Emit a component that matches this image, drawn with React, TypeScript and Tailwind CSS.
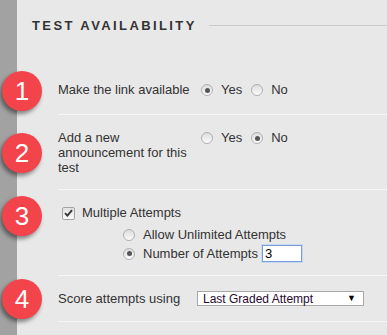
import React from "react"

const Badge = ({ n }: { n: number }) => (
    <div className="w-[40px] h-[40px] rounded-full bg-[#f3444b] text-white text-[26px] leading-none flex items-center justify-center shadow-[-2px_3px_4px_rgba(0,0,0,0.45)]">
        {n}
    </div>
)

const Radio = ({ checked }: { checked?: boolean }) => (
    <span className="w-[12px] h-[12px] rounded-full border border-[#b0b0b0] bg-linear-to-b from-[#dcdcdc] to-[#fbfbfb] flex items-center justify-center shrink-0">
        {checked && <span className="w-[5px] h-[5px] rounded-full bg-[#555]" />}
    </span>
)

const Check = () => (
    <span className="w-[13px] h-[13px] rounded-[2px] border border-[#a4a4a4] bg-linear-to-b from-[#e2e2e2] to-[#fafafa] flex items-center justify-center shrink-0">
        <svg width="9" height="8" viewBox="0 0 9 8">
            <path d="M1 4.2 L3.4 6.6 L8 1.2" fill="none" stroke="#333" strokeWidth="1.8" />
        </svg>
    </span>
)

const YesNo = ({ yes }: { yes: boolean }) => (
    <div className="flex items-center h-[15px]">
        <Radio checked={yes} />
        <span className="ml-[8px]">Yes</span>
        <span className="ml-[9px]"><Radio checked={!yes} /></span>
        <span className="ml-[8px]">No</span>
    </div>
)

export default function App() {
    return (
        <div className="w-[387px] h-[335px] overflow-hidden bg-[linear-gradient(to_right,#a2a2a2_17px,#e8e8e8_17px)] font-['Liberation_Sans',Arial,sans-serif] text-[13px] text-[#333]">
            {/* titulo */}
            <div className="h-[66px] pt-[18px]">
                <div className="flex items-center h-[14px] pl-[32px]">
                    <span className="font-bold tracking-[2.4px] leading-none">TEST AVAILABILITY</span>
                    <span className="flex-1 h-px bg-[#c9c9c9] ml-[12px]" />
                </div>
            </div>

            {/* 1 */}
            <div className="flex h-[49px]">
                <div className="w-[58px] pl-[2px] flex items-center"><Badge n={1} /></div>
                <div className="flex-1 flex items-center border-b border-[#f6f6f6]">
                    <span className="w-[143px]">Make the link available</span>
                    <YesNo yes={true} />
                </div>
            </div>

            {/* 2 */}
            <div className="flex h-[75px]">
                <div className="w-[58px] pl-[2px] flex items-center"><Badge n={2} /></div>
                <div className="flex-1 flex items-center border-b border-[#f6f6f6]">
                    <div className="flex items-start">
                        <span className="w-[143px] leading-[15px] pr-[14px]">Add a new announcement for this test</span>
                        <div className="pt-[1px]"><YesNo yes={false} /></div>
                    </div>
                </div>
            </div>

            {/* 3 */}
            <div className="flex h-[86px]">
                <div className="w-[58px] pl-[2px] pt-[6px]"><Badge n={3} /></div>
                <div className="flex-1 flex flex-col pt-[16px] border-b border-[#f6f6f6]">
                    <div className="flex items-center h-[14px] ml-[4px]">
                        <Check />
                        <span className="ml-[7px]">Multiple Attempts</span>
                    </div>
                    <div className="flex items-center h-[14px] mt-[8px] ml-[65px]">
                        <Radio />
                        <span className="ml-[8px]">Allow Unlimited Attempts</span>
                    </div>
                    <div className="flex items-center h-[17px] mt-[3px] ml-[65px]">
                        <Radio checked />
                        <span className="ml-[8px]">Number of Attempts</span>
                        <div className="ml-[4px] w-[40px] h-[17px] bg-white border border-[#7a9cd8] shadow-[0_0_0_1px_#c8d8f2] pl-[2px] flex items-center text-black">3</div>
                    </div>
                </div>
            </div>

            {/* 4 */}
            <div className="flex h-[46px]">
                <div className="w-[58px] pl-[2px] flex items-center"><Badge n={4} /></div>
                <div className="flex-1 flex items-center border-b border-[#f6f6f6]">
                    <span className="w-[139px]">Score attempts using</span>
                    <div className="w-[167px] h-[15px] bg-white border border-[#a8a8a8] flex items-center justify-between pl-[5px] pr-[7px] text-[12px] text-[#2a0a30]">
                        <span>Last Graded Attempt</span>
                        <span className="text-[9px] text-black">▼</span>
                    </div>
                </div>
            </div>
        </div>
    )
}
